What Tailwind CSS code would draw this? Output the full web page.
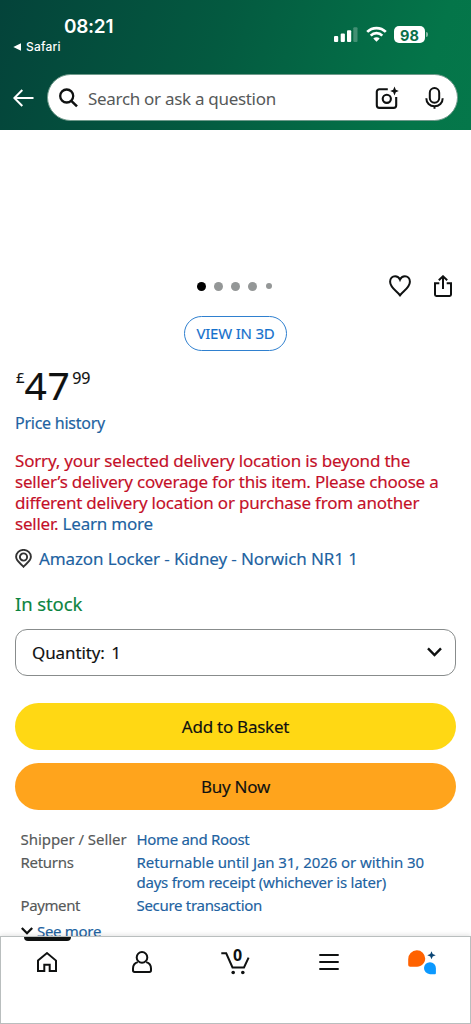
<!DOCTYPE html>
<html lang="en">
<head>
<meta charset="utf-8">
<title>Product</title>
<script src="https://cdn.jsdelivr.net/npm/@tailwindcss/browser@4"></script>
</head>
<body class="bg-white">
<div class="w-[471px] h-[1024px] overflow-hidden flex flex-col bg-white font-['Noto_Sans',sans-serif] text-[#0f1111] whitespace-nowrap">
  <header class="h-[130px] shrink-0 bg-[linear-gradient(108deg,#04433a_0%,#045a40_45%,#047549_88%,#05774a_100%)]">
    <div class="h-[74px] flex justify-between font-['Inter',sans-serif] text-white">
      <div class="pl-[13px] pt-[15px]">
        <div class="pl-[51px] text-[19px] leading-6 font-semibold tracking-[-0.3px]">08:21</div>
        <div class="flex items-center gap-[5px] text-[12px] leading-4 font-medium tracking-[0.2px]">
          <svg class="w-2 h-2" viewBox="0 0 8 8"><path d="M8 .3v7.4L.3 4z" fill="#fff"/></svg>Safari
        </div>
      </div>
      <div class="pt-[25px] pr-[43px] flex items-start">
        <svg class="w-6 h-[18px] mt-[1px]" viewBox="0 0 24 18"><g fill="#fff"><rect x="0" y="10" width="4.2" height="6" rx="1"/><rect x="6.700" y="7.500" width="4.200" height="8.500" rx="1"/><rect x="13" y="4.300" width="4.200" height="11.700" rx="1"/><rect x="19.300" y="1.300" width="4.200" height="14.700" rx="1" opacity=".25"/></g></svg>
        <svg class="w-[21px] h-[17px] ml-[8px]" viewBox="0 0 21 17"><g fill="none" stroke="#fff" stroke-width="2.700"><path d="M1.200 6.900a13.200 13.200 0 0 1 18.600 0"/><path d="M4.700 10.600a8.200 8.200 0 0 1 11.600 0"/></g><path d="M10.500 16.800l-3.200-3.300a4.600 4.600 0 0 1 6.400 0z" fill="#fff"/></svg>
        <div class="ml-[7px] mt-px w-[31px] h-[17px] rounded-[5px] bg-white flex items-center justify-center text-[14.5px] leading-[17px] pt-px font-bold text-[#0b7048]">98</div>
        <div class="ml-px mt-[7px] w-[2px] h-[5px] rounded-r-full bg-white/50"></div>
      </div>
    </div>
    <div class="flex items-center pl-[13px]">
      <svg class="mt-px w-[21px] h-[18px]" viewBox="0 0 21 18" fill="none" stroke="#fff" stroke-width="2"><path d="M20.500 9H1.500M9.300 1L1.300 9l8 8"/></svg>
      <div class="ml-[13px] w-[411px] h-[47px] rounded-full bg-white border border-[#6f9a8b] flex items-center">
        <svg class="ml-[11px] mt-px w-[19px] h-[20px]" viewBox="0 0 19 20" fill="none" stroke="#0f1111" stroke-width="2.300"><circle cx="7.700" cy="8" r="6.500"/><path d="M12.300 12.800l5.700 5.500" stroke-width="2.500"/></svg>
        <span class="ml-[10px] w-[287px] text-[17px] leading-6 text-[#565959] tracking-[-0.3px] pt-[3px]">Search or ask a question</span>
        <svg class="w-[24px] h-[24px]" viewBox="0 0 24 24" fill="none" stroke="#0f1111" stroke-width="2.100"><path d="M12.800 3.200H4.400a2.600 2.600 0 0 0-2.600 2.600v13.500a2.600 2.600 0 0 0 2.600 2.600h14.200a2.600 2.600 0 0 0 2.600-2.600V11"/><circle cx="11.800" cy="12.800" r="4.100"/><path d="M19.500.6l1.300 3.100 3 1.300-3 1.300-1.300 3.100-1.300-3.100-3-1.300 3-1.300z" fill="#0f1111" stroke="none"/></svg>
        <svg class="ml-[26px] w-[19px] h-[22px]" viewBox="0 0 19 22" fill="none" stroke="#0f1111" stroke-width="2"><rect x="4.800" y="1" width="9.400" height="14.700" rx="4.700"/><path d="M1.300 11.300c0 4.600 3.400 7.900 8.200 7.900s8.200-3.300 8.200-7.900M9.500 19v2.800"/></svg>
      </div>
    </div>
  </header>
  <main class="h-[806px] shrink-0 overflow-hidden px-[15px] [-webkit-text-stroke:0.150px]">
    <div class="h-[143px]"></div>
    <div class="h-[26px] flex items-center">
      <div class="ml-[181.500px] w-[192px] flex items-center gap-2">
        <i class="size-[9px] rounded-full bg-black"></i><i class="size-[9px] rounded-full bg-[#949797]"></i><i class="size-[9px] rounded-full bg-[#949797]"></i><i class="size-[9px] rounded-full bg-[#949797]"></i><i class="ml-[1.500px] size-[6px] rounded-full bg-[#949797]"></i>
      </div>
      <svg class="w-[22px] h-[22px]" viewBox="0 0 22 22" fill="none" stroke="#0f1111" stroke-width="2"><path d="M11 20.300C8 16.300 1.100 12.600 1.100 6.700c0-3.200 2.300-5.500 5-5.500 2.200 0 4 1.300 4.900 3.400.9-2.100 2.700-3.400 4.900-3.400 2.700 0 5 2.300 5 5.500 0 5.900-6.900 9.600-9.900 13.600z"/></svg>
      <svg class="ml-[23.500px] w-[18px] h-[22px]" viewBox="0 0 18 22" fill="none" stroke="#0f1111" stroke-width="2"><path d="M5.300 8.200H1v11.400c0 .8.500 1.400 1.300 1.400h13.400c.8 0 1.300-.6 1.300-1.400V8.200h-4.300M9 14V1.600M4.800 5.300L9 1.300l4.200 4"/></svg>
    </div>
    <div class="mt-[17px] ml-[169px] w-[103px] h-[35px] rounded-full border border-[#2f80cf] flex items-center justify-center text-[15px] text-[#1470cc] tracking-[-0.2px]">VIEW IN 3D</div>
    <div class="mt-[15px] h-[42px] flex items-start leading-none">
      <span class="mt-[4px] ml-px text-[15px]">£</span><span class="mt-[-1px] text-[39px] tracking-[0.500px]">47</span><span class="mt-[4px] ml-[2px] text-[16px]">99</span>
    </div>
    <div class="mt-[3px] h-6 leading-6 text-[16px] text-[#2162a1] tracking-[-0.25px]">Price history</div>
    <div class="mt-[14.500px] text-[17px] leading-[21.330px] text-[#c40f28]">
      <div><span class="tracking-[-0.180px]">Sorry, your selected delivery location is beyond the</span></div>
      <div><span class="tracking-[-0.220px]">seller’s delivery coverage for this item. Please choose a</span></div>
      <div><span class="tracking-[-0.210px]">different delivery location or purchase from another</span></div>
      <div><span class="tracking-[-0.220px]">seller. <span class="text-[#2162a1]">Learn more</span></span></div>
    </div>
    <div class="mt-[12px] h-6 flex items-center text-[17px] text-[#2162a1]">
      <svg class="w-[17px] h-[19px] mr-[7px]" viewBox="0 0 17 19" fill="none" stroke="#333"><path stroke-width="1.900" d="M8.500 17.700C6 14.600 1.100 12.200 1.100 7.800c0-4 3.300-6.900 7.400-6.900s7.400 2.900 7.400 6.900c0 4.400-4.900 6.800-7.400 9.900z"/><circle cx="8.500" cy="8" r="3.600" stroke-width="1.900"/></svg>
      <span class="tracking-[-0.120px]">Amazon Locker - Kidney - Norwich NR1 1</span>
    </div>
    <div class="mt-[21px] h-6 leading-6 text-[18.500px] text-[#0b8440] tracking-[-0.100px]">In stock</div>
    <div class="mt-[13px] w-[441px] h-[47px] rounded-[12px] border border-[#888c8c] flex items-center justify-between pl-[16px] pr-[13px] text-[17px]">
      <span class="tracking-[-0.100px]">Quantity: <span class="ml-[2px]">1</span></span>
      <svg class="w-[15px] h-[10px]" viewBox="0 0 15 10" fill="none" stroke="#0f1111" stroke-width="2.400"><path d="M1 1.300l6.500 6.700L14 1.300"/></svg>
    </div>
    <div class="mt-[27px] w-[441px] h-[47px] rounded-full bg-[#ffd814] flex items-center justify-center text-[17px]"><span class="tracking-[-0.250px]">Add to Basket</span></div>
    <div class="mt-[13px] w-[441px] h-[47px] rounded-full bg-[#ffa41c] flex items-center justify-center text-[17px]"><span class="tracking-[-0.250px]">Buy Now</span></div>
    <div class="mt-[20px] ml-[5.500px] grid grid-cols-[116px_1fr] gap-y-[4px] text-[15px] leading-[19.400px] text-[#565959]">
      <span class="tracking-[-0.050px]">Shipper / Seller</span><span class="text-[#2162a1] tracking-[-0.330px]">Home and Roost</span>
      <span class="tracking-[-0.300px]">Returns</span><span class="text-[#2162a1]"><span class="tracking-[-0.060px]">Returnable until Jan 31, 2026 or within 30</span><br><span class="tracking-[-0.250px]">days from receipt (whichever is later)</span></span>
      <span class="tracking-[-0.400px]">Payment</span><span class="text-[#2162a1] tracking-[-0.300px]">Secure transaction</span>
    </div>
    <div class="mt-[6px] ml-[6px] flex items-center text-[15px] leading-5 text-[#2162a1]">
      <svg class="mr-[4px] w-[12px] h-[8px]" viewBox="0 0 12 8" fill="none" stroke="#0f1111" stroke-width="2.300"><path d="M.8 1l5.200 5.200L11.200 1"/></svg><span class="tracking-[-0.300px]">See more</span>
    </div>
  </main>
  <nav class="h-[88px] shrink-0 border border-[#b9bebe] bg-white shadow-[0_-1px_5px_rgba(0,0,0,0.12)] relative">
    <div class="ml-[23px] w-[47px] h-[4px] rounded-b-[4px] bg-[#0f1111]"></div>
    <div class="mt-[8px] h-[26px] flex items-center pl-[36px]">
      <svg class="w-[20px] h-[20px]" viewBox="0 0 20 20" fill="none" stroke="#0f1111" stroke-width="2"><path d="M1 8.600L10 1.100l9 7.500V19h-6.300v-6.200H7.300V19H1z"/></svg>
      <svg class="ml-[74.500px] w-[20px] h-[22px]" viewBox="0 0 20 22" fill="none" stroke="#0f1111" stroke-width="2"><circle cx="10" cy="6.400" r="5.300"/><path d="M5.800 11.100C2.600 12 1 14.500 1 17.500v1.800c0 1 .6 1.600 1.600 1.600h14.800c1 0 1.600-.6 1.600-1.600v-1.800c0-3-1.600-5.500-4.800-6.400"/></svg>
      <svg class="ml-[69.500px] w-[29px] h-[26px] overflow-visible" viewBox="0 0 29 26"><path d="M.3 4.300h4.900l6.300 14.200H23l4.600-9.800" fill="none" stroke="#0f1111" stroke-width="2"/><circle cx="12.200" cy="23.500" r="1.800" fill="#0f1111"/><circle cx="21.800" cy="23.500" r="1.800" fill="#0f1111"/><text x="16.500" y="12.200" text-anchor="middle" font-family="Noto Sans" font-size="16" font-weight="700" fill="#0f1111">0</text></svg>
      <svg class="ml-[69px] w-[20px] h-[18px]" viewBox="0 0 20 18" stroke="#0f1111" stroke-width="2.100"><path d="M.3 2h19.400M.3 9h19.400M.3 16h19.400"/></svg>
      <svg class="ml-[68px] w-[30px] h-[26px]" viewBox="0 0 30 26"><path d="M1.200 10.200A8.600 8.600 0 0 1 9.800 1.300a8.300 8.300 0 0 1 8.400 8.300c0 4.600-3.600 8.100-8.100 8.100H3.200c-1.200 0-2-.8-2-2z" fill="#ff6200"/><path d="M17 19a5.900 5.900 0 0 1 11.900.2v4.700c0 .8-.5 1.300-1.300 1.300H23a6 6 0 0 1-6-6.200z" fill="#0c99ff"/><path d="M24.500 2.200l1.200 2.800 3 1.200-3 1.200-1.200 2.900-1.200-2.900-3-1.200 3-1.200z" fill="#0b4675"/></svg>
    </div>
  </nav>
</div>
</body>
</html>
